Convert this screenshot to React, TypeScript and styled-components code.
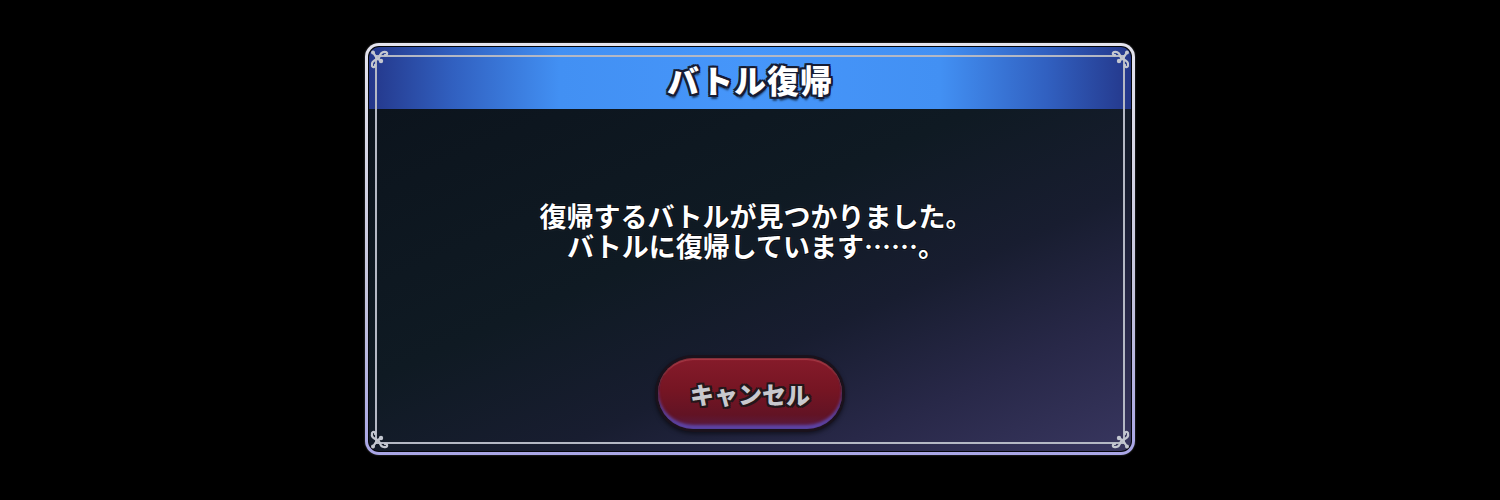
import * as React from 'react';
import styled, { createGlobalStyle } from 'styled-components';

const GlobalStyle = createGlobalStyle`
  html, body {
    margin: 0;
    padding: 0;
    background: #000;
  }
  body {
    font-family: 'Noto Sans CJK JP', 'Noto Sans', sans-serif;
  }
`;

const Stage = styled.div`
  width: 1500px;
  height: 500px;
  display: flex;
  justify-content: center;
  align-items: flex-start;
  padding-top: 43px;
  box-sizing: border-box;
  background: #000;
`;

// silver outer rim, fading to lavender at the bottom
const Frame = styled.div`
  position: relative;
  width: 770px;
  height: 412px;
  box-sizing: border-box;
  padding: 3px;
  border-radius: 14px;
  background: linear-gradient(180deg, #e4e4ee 0%, #c4c4dc 60%, #a9a6e6 100%);
  box-shadow: 0 0 2px rgba(255, 255, 255, 0.3);
`;

const Inner = styled.div`
  height: 100%;
  box-sizing: border-box;
  padding: 1px;
  border-radius: 11px;
  background: #05060a;
  display: flex;
  flex-direction: column;
  overflow: hidden;
`;

const Header = styled.div`
  height: 62px;
  flex-shrink: 0;
  display: flex;
  justify-content: center;
  align-items: center;
  border-radius: 10px 10px 0 0;
  background: linear-gradient(
    90deg,
    #24378a 0%,
    #3160c0 11%,
    #4290f3 25%,
    #4696fa 50%,
    #4290f3 75%,
    #3160c0 89%,
    #24378a 100%
  );
`;

const Title = styled.h1`
  margin: 2px 0 0;
  font-size: 32px;
  font-weight: 900;
  letter-spacing: 1px;
  color: #fff;
  text-shadow:
    -2px -2px 0 #161c34,
    2px -2px 0 #161c34,
    -2px 2px 0 #161c34,
    2px 2px 0 #161c34,
    0 -2px 0 #161c34,
    0 2px 0 #161c34,
    -2px 0 0 #161c34,
    2px 0 0 #161c34,
    1px 4px 2px rgba(0, 0, 0, 0.6);
`;

const Body = styled.div`
  flex: 1;
  display: flex;
  flex-direction: column;
  align-items: center;
  justify-content: space-between;
  padding: 92px 0 19px;
  border-radius: 0 0 10px 10px;
  background: linear-gradient(
    to bottom right,
    #0c141d 0%,
    #0f1a23 40%,
    #181d30 62%,
    #282848 80%,
    #38365f 100%
  );
`;

const Message = styled.p`
  margin: 0;
  padding-left: 12px;
  font-size: 27px;
  line-height: 30px;
  font-weight: 700;
  color: #fff;
  text-align: center;
  text-shadow:
    -1px -1px 0 #0a0e14,
    1px -1px 0 #0a0e14,
    -1px 1px 0 #0a0e14,
    1px 1px 0 #0a0e14,
    0 0 3px rgba(255, 255, 255, 0.25);
`;

const ButtonRim = styled.button`
  width: 190px;
  height: 77px;
  padding: 3px;
  border: none;
  border-radius: 38px;
  background: #1a121c;
  cursor: pointer;
  box-shadow: 0 2px 4px rgba(0, 0, 0, 0.5);
`;

const ButtonFace = styled.span`
  display: flex;
  justify-content: center;
  align-items: center;
  height: 100%;
  border-radius: 35px;
  background: linear-gradient(180deg, #861b2a 0%, #761523 45%, #621324 80%, #551c46 100%);
  box-shadow:
    inset 0 2px 1px rgba(255, 130, 140, 0.3),
    inset 0 -4px 3px rgba(95, 85, 210, 0.7),
    inset 0 0 0 1px rgba(40, 8, 14, 0.6);
`;

const ButtonLabel = styled.span`
  font-family: 'Noto Sans CJK JP', 'Noto Sans', sans-serif;
  font-size: 24px;
  font-weight: 900;
  color: #c9c9ce;
  text-shadow:
    -2px -2px 0 #24161a,
    2px -2px 0 #24161a,
    -2px 2px 0 #24161a,
    2px 2px 0 #24161a,
    0 -2px 0 #24161a,
    0 2px 0 #24161a,
    -2px 0 0 #24161a,
    2px 0 0 #24161a;
`;

// thin silver line running just inside the rim
const InnerLine = styled.div`
  position: absolute;
  top: 12px;
  left: 10px;
  right: 10px;
  bottom: 11px;
  border: 2px solid #b4b8c4;
  pointer-events: none;
`;

const Corner = styled.svg<{ $x: 'left' | 'right'; $y: 'top' | 'bottom' }>`
  position: absolute;
  width: 24px;
  height: 24px;
  ${({ $x }) => ($x === 'left' ? 'left: 2px;' : 'right: 2px;')}
  ${({ $y }) => ($y === 'top' ? 'top: 4px;' : 'bottom: 3px;')}
  transform: ${({ $x, $y }) =>
    `scale(${$x === 'left' ? 1 : -1}, ${$y === 'top' ? 1 : -1})`};
  pointer-events: none;
`;

function Ornament({ x, y }: { x: 'left' | 'right'; y: 'top' | 'bottom' }) {
  return (
    <Corner $x={x} $y={y} viewBox="0 0 24 24">
      <g fill="none" stroke="#c3c7d0" strokeWidth="2.2" strokeLinecap="round">
        {/* centre petal pointing into the corner */}
        <path d="M14 14 C10 12 8 9 6 5" />
        {/* left curl */}
        <path d="M11 12 C7 13 4 15 5 19 C6 21 9 20 8 18" />
        {/* top curl */}
        <path d="M12 11 C13 7 15 4 19 5 C21 6 20 9 18 8" />
      </g>
      <circle cx="6" cy="5.5" r="2" fill="#c3c7d0" />
      <circle cx="14" cy="14" r="2.2" fill="#c3c7d0" />
    </Corner>
  );
}

export default function App() {
  return (
    <>
      <GlobalStyle />
      <Stage>
        <Frame>
          <Inner>
            <Header>
              <Title>バトル復帰</Title>
            </Header>
            <Body>
              <Message>
                復帰するバトルが見つかりました。
                <br />
                バトルに復帰しています……。
              </Message>
              <ButtonRim type="button">
                <ButtonFace>
                  <ButtonLabel>キャンセル</ButtonLabel>
                </ButtonFace>
              </ButtonRim>
            </Body>
          </Inner>
          <InnerLine />
          <Ornament x="left" y="top" />
          <Ornament x="right" y="top" />
          <Ornament x="left" y="bottom" />
          <Ornament x="right" y="bottom" />
        </Frame>
      </Stage>
    </>
  );
}
